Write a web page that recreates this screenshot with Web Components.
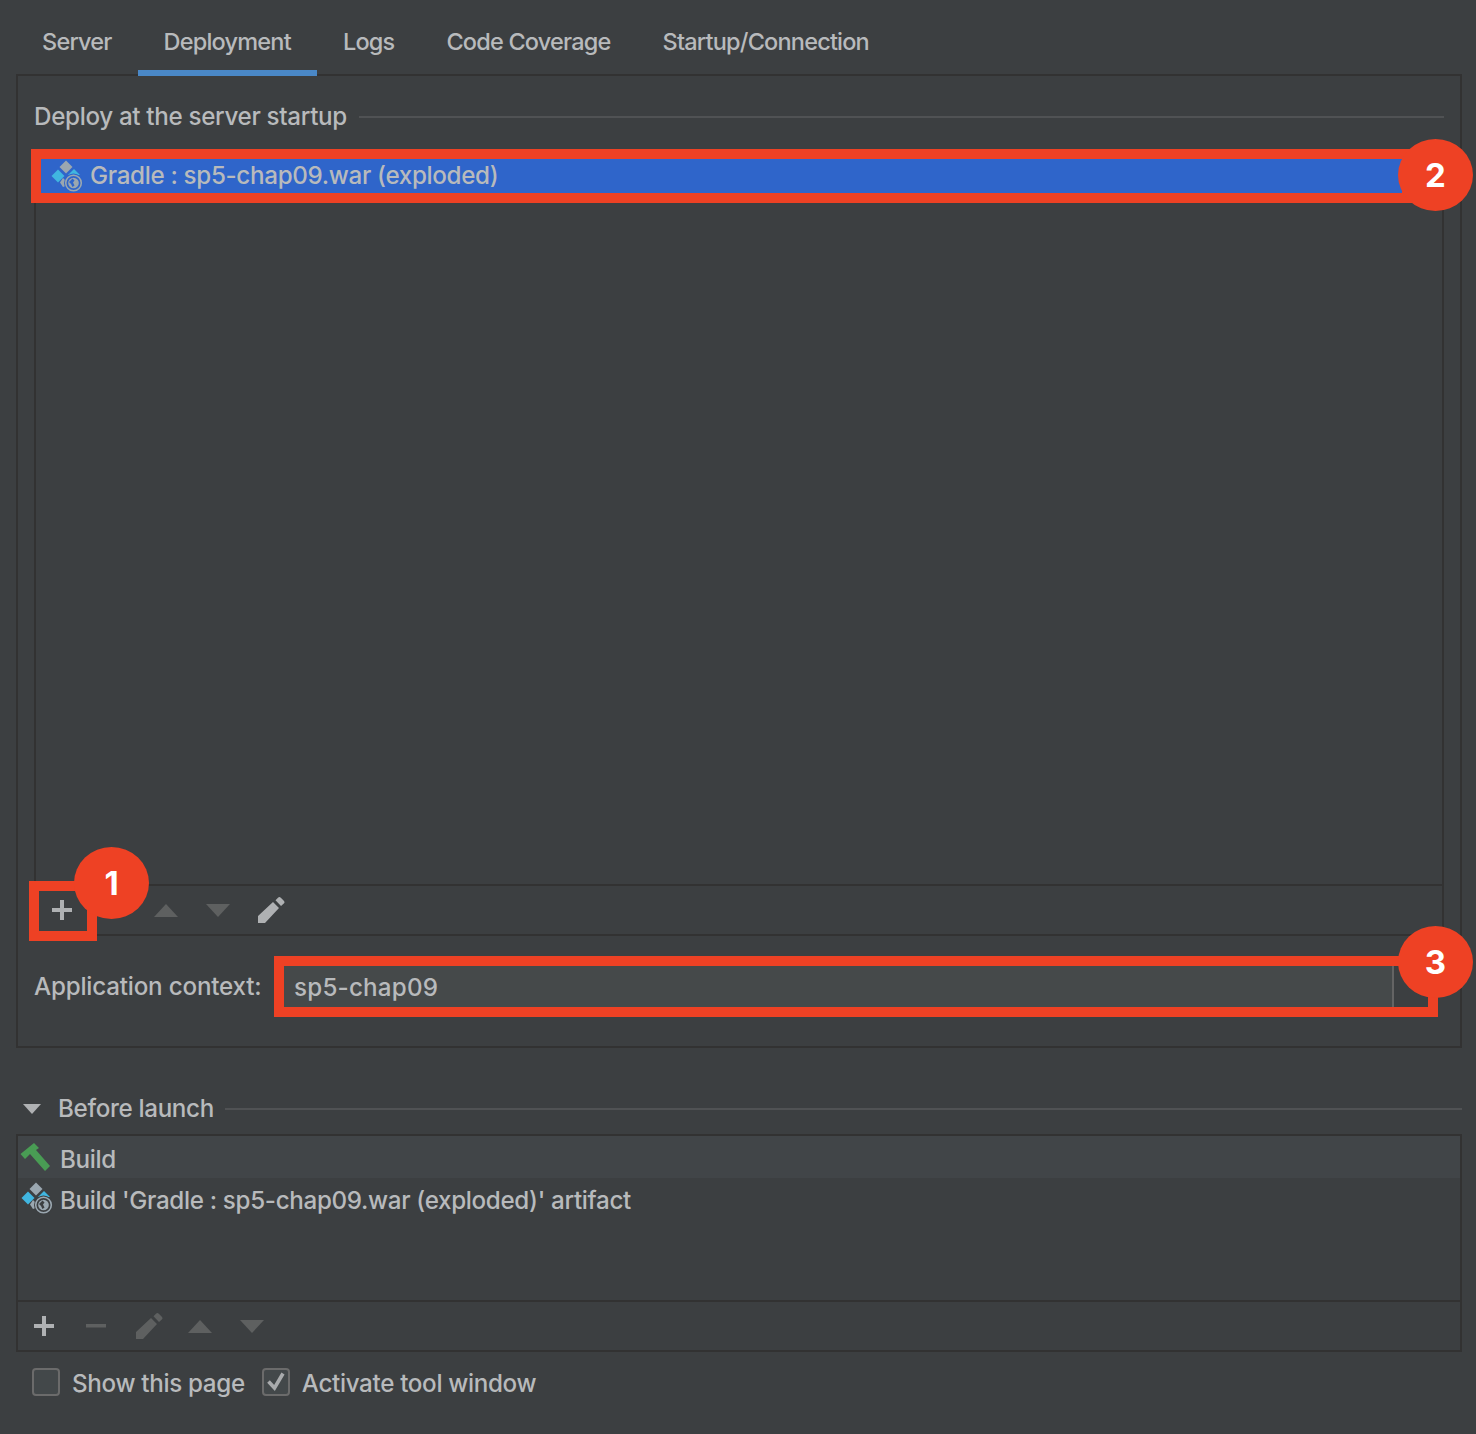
<!DOCTYPE html>
<html lang="en">
<head>
<meta charset="UTF-8">
<title>Deployment</title>
<style>
    html, body { margin: 0; background: #3c3f41; }
    body { font: 450 24.2px/34px Inter, "Liberation Sans", sans-serif; letter-spacing: -0.33px; color: #b8babc; }
    #page { position: relative; width: 1476px; height: 1434px; overflow: hidden; }
</style>
</head>
<body>
<div id="page">
    <tab-bar>
        <tab-item>Server</tab-item>
        <tab-item selected>Deployment</tab-item>
        <tab-item>Logs</tab-item>
        <tab-item>Code Coverage</tab-item>
        <tab-item>Startup/Connection</tab-item>
    </tab-bar>

    <deploy-panel>
        <titled-line>Deploy at the server startup</titled-line>
        <tool-list style="margin-top:23px" body="725">
            <list-row selected height="34" inset="5" pad="10" box="49"><svg-icon slot="icon" name="artifact"></svg-icon>Gradle : sp5-chap09.war (exploded)</list-row>
            <tool-btn slot="tools" name="plus" x="16"></tool-btn>
            <tool-btn slot="tools" name="up" x="118" dim></tool-btn>
            <tool-btn slot="tools" name="down" x="170" dim></tool-btn>
            <tool-btn slot="tools" name="pencil" x="222"></tool-btn>
        </tool-list>
        <context-field label="Application context:" value="sp5-chap09"></context-field>
    </deploy-panel>

    <before-launch>
        <tool-list slot="list" body="164">
            <list-row hover height="42" pad="2" box="42" drop="3"><svg-icon slot="icon" name="hammer"></svg-icon>Build</list-row>
            <list-row height="40" pad="3" box="42" drop="3"><svg-icon slot="icon" name="artifact"></svg-icon>Build 'Gradle : sp5-chap09.war (exploded)' artifact</list-row>
            <tool-btn slot="tools" name="plus" x="16"></tool-btn>
            <tool-btn slot="tools" name="minus" x="68" dim></tool-btn>
            <tool-btn slot="tools" name="pencil" x="118" dim></tool-btn>
            <tool-btn slot="tools" name="up" x="170" dim></tool-btn>
            <tool-btn slot="tools" name="down" x="222" dim></tool-btn>
        </tool-list>
        <check-box slot="checks">Show this page</check-box>
        <check-box slot="checks" checked>Activate tool window</check-box>
    </before-launch>

    <red-frame x="31" y="149" w="1381" h="54"></red-frame>
    <red-frame x="29" y="881" w="68" h="60"></red-frame>
    <red-frame x="274" y="956" w="1164" h="61"></red-frame>
    <red-badge x="74" y="847">1</red-badge>
    <red-badge x="1398" y="139">2</red-badge>
    <red-badge x="1398" y="926">3</red-badge>
</div>

<script>
    const ICONS = {
        plus: { w: 20, h: 20, svg: '<path d="M8 0h4v8h8v4h-8v8H8v-8H0V8h8z" fill="currentColor"/>' },
        minus: { w: 20, h: 4, svg: '<rect width="20" height="3.5" fill="currentColor"/>' },
        up: { w: 24, h: 13, svg: '<path d="M12 0l12 13H0z" fill="currentColor"/>' },
        down: { w: 24, h: 13, svg: '<path d="M0 0h24L12 13z" fill="currentColor"/>' },
        pencil: { w: 27, h: 26, svg: '<path d="M0 26v-7L15 5l6 6L7 26zM17.5 3.2L20 .8a2 2 0 0 1 2.8 0l3 3a2 2 0 0 1 0 2.8L23 9z" fill="currentColor"/>' },
        hammer: { w: 30, h: 28, svg: '<path d="M.5 11L14 0l5 5-3 2 14 16-5 5L10 11l-5 5z" fill="#499c54"/>' },
        artifact: { w: 32, h: 32, svg: `
            <path d="M15 .5L21.500 7 15 13.500 8.500 7z" fill="#9aa7b0"/>
            <path d="M7 9.500l6.500 6.500L7 22.500.5 16z" fill="#40b6e0"/>
            <path d="M17 15l6-6 6 6z" fill="#40b6e0"/>
            <path d="M12 18l3 3v5l-3 1-3-4.500z" fill="#9aa7b0"/>
            <circle cx="22.500" cy="23" r="9.500" fill="var(--cut, #3c3f41)"/>
            <circle cx="22.500" cy="23" r="7.800" fill="none" stroke="#9aa7b0" stroke-width="1.600"/>
            <circle cx="22.500" cy="23" r="5.300" fill="#9aa7b0"/>
            <path d="M18 22l3.500-3.500 2 2-1.500 2 1.500 3-2 1.500-1.500-3z" fill="var(--cut, #3c3f41)"/>` }
    };

    class SvgIcon extends HTMLElement {
        connectedCallback() {
            const icon = ICONS[this.getAttribute('name')];
            this.attachShadow({ mode: 'open' }).innerHTML = `
                <style>:host { display: block; line-height: 0; } svg { display: block; }</style>
                <svg width="${icon.w}" height="${icon.h}" viewBox="0 0 ${icon.w} ${icon.h}">${icon.svg}</svg>`;
        }
    }

    class TabBar extends HTMLElement {
        constructor() {
            super();
            this.attachShadow({ mode: 'open' }).innerHTML = `
                <style>:host { display: flex; height: 74px; padding-left: 16px; position: relative; z-index: 1; font-size: 23.5px; letter-spacing: -0.8px; }</style>
                <slot></slot>`;
        }
    }

    class TabItem extends HTMLElement {
        constructor() {
            super();
            this.attachShadow({ mode: 'open' }).innerHTML = `
                <style>
                    :host { display: block; position: relative; padding: 25px 26px 0; }
                    :host([selected])::after {
                        content: ""; position: absolute; left: 0; right: 0; bottom: -2px;
                        height: 6px; background: #4a88c7;
                    }
                </style>
                <slot></slot>`;
        }
    }

    class DeployPanel extends HTMLElement {
        constructor() {
            super();
            this.attachShadow({ mode: 'open' }).innerHTML = `
                <style>
                    :host {
                        display: block; margin: 0 14px 0 16px; padding: 24px 16px 39px;
                        border: 2px solid #323232;
                    }
                </style>
                <slot></slot>`;
        }
    }

    class TitledLine extends HTMLElement {
        constructor() {
            super();
            this.attachShadow({ mode: 'open' }).innerHTML = `
                <style>
                    :host { display: flex; align-items: center; gap: 12px; height: 34px; }
                    i { flex: 1; height: 2px; background: #505254; margin-top: -1px; }
                </style>
                <slot></slot><i></i>`;
        }
    }

    class ToolList extends HTMLElement {
        connectedCallback() {
            this.attachShadow({ mode: 'open' }).innerHTML = `
                <style>
                    :host { display: block; border: 2px solid #323232; }
                    .body { height: ${this.getAttribute('body')}px; }
                    .tools { position: relative; height: 48px; border-top: 2px solid #323232; }
                </style>
                <div class="body"><slot></slot></div>
                <div class="tools"><slot name="tools"></slot></div>`;
        }
    }

    class ListRow extends HTMLElement {
        connectedCallback() {
            const a = (n, d) => this.getAttribute(n) || d;
            this.attachShadow({ mode: 'open' }).innerHTML = `
                <style>
                    :host {
                        display: flex; align-items: center; box-sizing: border-box;
                        height: ${a('height')}px; margin: 0 ${a('inset', 0)}px;
                    }
                    :host([selected]) { background: #2f65ca; --cut: #2f65ca; }
                    :host([hover]) { background: #414548; --cut: #414548; }
                    .icon { width: ${a('box')}px; padding-left: ${a('pad')}px; box-sizing: border-box; flex: none; }
                    .text { position: relative; top: ${a('drop', 0)}px; }
                </style>
                <div class="icon"><slot name="icon"></slot></div><span class="text"><slot></slot></span>`;
        }
    }

    class ToolBtn extends HTMLElement {
        connectedCallback() {
            const icon = ICONS[this.getAttribute('name')];
            this.attachShadow({ mode: 'open' }).innerHTML = `
                <style>
                    :host {
                        position: absolute; top: ${24 - icon.h / 2}px; left: ${this.getAttribute('x')}px;
                        display: block; line-height: 0; color: #afb1b3;
                    }
                    :host([dim]) { color: #5e6060; }
                    svg { display: block; }
                </style>
                <svg width="${icon.w}" height="${icon.h}" viewBox="0 0 ${icon.w} ${icon.h}">${icon.svg}</svg>`;
        }
    }

    class ContextField extends HTMLElement {
        connectedCallback() {
            this.attachShadow({ mode: 'open' }).innerHTML = `
                <style>
                    :host { display: flex; align-items: center; margin-top: 30px; padding-right: 50px; }
                    label { width: 250px; flex: none; letter-spacing: -0.2px; }
                    div {
                        flex: 1; height: 41px; line-height: 43px; padding-left: 10px; box-sizing: border-box;
                        background: #45494a; border-right: 2px solid #646464; letter-spacing: 0.2px;
                    }
                </style>
                <label>${this.getAttribute('label')}</label><div>${this.getAttribute('value')}</div>`;
        }
    }

    class BeforeLaunch extends HTMLElement {
        constructor() {
            super();
            this.attachShadow({ mode: 'open' }).innerHTML = `
                <style>
                    :host { display: block; margin: 44px 14px 0 16px; }
                    .head { display: flex; align-items: center; height: 34px; margin-bottom: 8px; }
                    .head svg { margin: 0 17px 0 7px; }
                    .head i { flex: 1; height: 2px; background: #505254; margin: -1px 0 0 11px; }
                    .checks { display: flex; gap: 17px; margin: 16px 0 0 16px; }
                </style>
                <div class="head">
                    <svg width="18" height="10" viewBox="0 0 18 10"><path d="M0 0h18L9 10z" fill="#afb1b3"/></svg>
                    <span>Before launch</span><i></i>
                </div>
                <slot name="list"></slot>
                <div class="checks"><slot name="checks"></slot></div>`;
        }
    }

    class CheckBox extends HTMLElement {
        connectedCallback() {
            const mark = this.hasAttribute('checked')
                ? '<svg width="28" height="28" viewBox="0 0 28 28"><path d="M6.500 13.500l6 6.500L21 5.500" fill="none" stroke="#a9abad" stroke-width="3.600"/></svg>'
                : '';
            this.attachShadow({ mode: 'open' }).innerHTML = `
                <style>
                    :host { display: flex; align-items: center; gap: 12px; height: 28px; }
                    .box {
                        width: 28px; height: 28px; box-sizing: border-box; position: relative;
                        border: 2px solid #6b6b6b; border-radius: 4px; background: #43484a;
                    }
                    .box svg { position: absolute; left: -2px; top: -2px; }
                    span { position: relative; top: 2px; }
                </style>
                <div class="box">${mark}</div><span><slot></slot></span>`;
        }
    }

    class RedFrame extends HTMLElement {
        connectedCallback() {
            const a = n => this.getAttribute(n);
            this.attachShadow({ mode: 'open' }).innerHTML = `
                <style>
                    :host {
                        position: absolute; left: ${a('x')}px; top: ${a('y')}px; width: ${a('w')}px; height: ${a('h')}px;
                        box-sizing: border-box; border: 10px solid #ee4124; z-index: 2;
                    }
                </style>`;
        }
    }

    class RedBadge extends HTMLElement {
        connectedCallback() {
            this.attachShadow({ mode: 'open' }).innerHTML = `
                <style>
                    :host {
                        position: absolute; left: ${this.getAttribute('x')}px; top: ${this.getAttribute('y')}px;
                        width: 75px; height: 72px; border-radius: 50%; background: #ee4124; z-index: 3;
                        display: flex; align-items: center; justify-content: center;
                        font: 700 33px/72px Inter, "Liberation Sans", sans-serif; letter-spacing: 0; color: #fff;
                    }
                </style>
                <slot></slot>`;
        }
    }

    customElements.define('svg-icon', SvgIcon);
    customElements.define('tab-bar', TabBar);
    customElements.define('tab-item', TabItem);
    customElements.define('deploy-panel', DeployPanel);
    customElements.define('titled-line', TitledLine);
    customElements.define('tool-list', ToolList);
    customElements.define('list-row', ListRow);
    customElements.define('tool-btn', ToolBtn);
    customElements.define('context-field', ContextField);
    customElements.define('before-launch', BeforeLaunch);
    customElements.define('check-box', CheckBox);
    customElements.define('red-frame', RedFrame);
    customElements.define('red-badge', RedBadge);
</script>
</body>
</html>
